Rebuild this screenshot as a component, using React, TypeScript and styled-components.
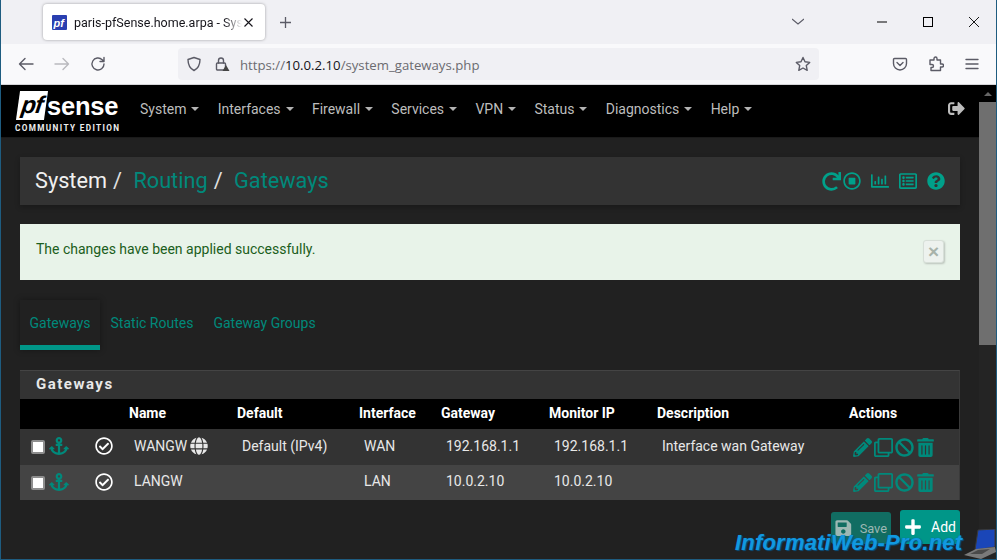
import React from "react";
import styled, { createGlobalStyle } from "styled-components";
import { FaAnchor, FaBan, FaGlobe, FaPencilAlt, FaPlus, FaQuestionCircle, FaRedo, FaRegChartBar, FaRegCheckCircle, FaRegClone, FaRegListAlt, FaRegStopCircle, FaSave, FaSignOutAlt, FaTrashAlt } from "react-icons/fa";

const Global = createGlobalStyle`
  html, body { margin: 0; padding: 0; width: 997px; height: 560px; overflow: hidden; background: #212121; }
  * { box-sizing: border-box; }
  body { font-family: Roboto, "Liberation Sans", sans-serif; }
`;

const Win = styled.div`
  width: 997px; height: 560px; display: flex; flex-direction: column; position: relative; overflow: hidden;
  border-left: 1px solid #1e5c80; border-right: 1px solid #1e5c80; border-bottom: 1px solid #1e5c80;
`;
const TabBar = styled.div`
  height: 44px; background: #f0f0f4; display: flex; align-items: flex-start; flex: none; padding-left: 42px; color: #15141a;
`;
const Tab = styled.div`
  width: 222px; height: 36px; margin-top: 4px; background: #fff; border-radius: 4px; box-shadow: 0 0 3px rgba(0,0,0,.35);
  display: flex; align-items: center; padding-left: 9px; color: #15141a; position: relative;
`;
const Favicon = styled.svg` width: 15px; height: 15px; flex: none; margin-right: 7px; `;
const TabTitle = styled.span`
  width: 170px; overflow: hidden; white-space: nowrap; font: 12.5px Roboto, sans-serif;
  -webkit-mask-image: linear-gradient(90deg, #000 150px, transparent 168px);
`;
const TabClose = styled.svg` width: 9px; height: 9px; flex: none; `;
const NewTab = styled.svg` width: 13px; height: 13px; margin: 16px 0 0 14px; flex: none; `;
const Spacer = styled.div` flex: 1; `;
const Caption = styled.svg` width: 12px; height: 12px; flex: none; margin-top: 16px; `;
const CaptionGroup = styled.div` display: flex; gap: 34px; padding-right: 16px; margin-left: 72px; `;
const Toolbar = styled.div`
  height: 41px; background: #f9f9fb; display: flex; align-items: center; flex: none; border-bottom: 1px solid #d5d5d8; position: relative;
`;
const ToolIcon = styled.svg` width: 16px; height: 16px; flex: none; `;
const NavIcons = styled.div` display: flex; align-items: center; gap: 20px; padding-left: 17px; width: 177px; `;
const UrlBar = styled.div`
  width: 641px; height: 32px; background: #f0f0f4; border-radius: 4px; display: flex; align-items: center; padding: 0 8px; gap: 12px;
`;
const Url = styled.div` font: 13.2px "Open Sans", sans-serif; color: #6b6b70; margin: 1px 0 0 -2px; white-space: nowrap; flex: 1; `;
const UrlHost = styled.span` color: #15141a; `;
const RightIcons = styled.div` display: flex; align-items: center; gap: 20px; padding-left: 73px; `;

const Page = styled.div` flex: 1; display: flex; min-height: 0; `;
const Main = styled.div` flex: 1; display: flex; flex-direction: column; background: #212121; min-width: 0; `;
const Scrollbar = styled.div` width: 17px; flex: none; display: flex; flex-direction: column; background: #242424; `;
const ScrollArrow = styled.div` height: 17px; background: #000; display: flex; align-items: center; justify-content: center; `;
const ScrollThumb = styled.div` height: 243px; background: #6f6f6f; `;
const Navbar = styled.div` height: 52px; background: #000; display: flex; align-items: center; flex: none; padding-left: 14px; position: relative; box-shadow: 0 1px 0 #1a1a1a; `;
const Logo = styled.div` width: 108px; height: 46px; display: flex; flex-direction: column; flex: none; `;
const LogoTop = styled.div` display: flex; align-items: flex-end; height: 32px; `;
const LogoPf = styled.div`
  width: 28px; height: 29px; background: #fff; color: #000; transform: skewX(-8deg); margin-left: 3px;
  font: italic 700 24px/27px "Liberation Sans", sans-serif; letter-spacing: -1px; text-align: center;
`;
const LogoSense = styled.div` color: #fff; font: 700 25.5px/28px "Liberation Sans", sans-serif; margin-left: 1px; letter-spacing: -.2px; `;
const LogoSub = styled.div` color: #eee; font: 700 8.2px/12px Roboto, sans-serif; letter-spacing: 1.37px; white-space: nowrap; margin-top: 2px; `;
const Menu = styled.div` display: flex; gap: 18.3px; margin-left: 17px; font-size: 14px; align-items: center; margin-top: -5px; `;
const MenuItem = styled.div` display: flex; align-items: center; gap: 5px; color: #bdbdbd; `;
const Caret = styled.span` width: 0; height: 0; border-left: 4px solid transparent; border-right: 4px solid transparent; border-top: 4px solid #b3b3b3; `;
const ScrollCaret = styled.span` width: 0; height: 0; border-left: 4px solid transparent; border-right: 4px solid transparent; border-bottom: 4px solid #666; `;
const Logout = styled.div` position: absolute; right: 14px; top: 15px; color: #bdbdbd; font-size: 17px; line-height: 17px; display: flex; `;

const Content = styled.div` padding: 20px 19px 0 19px; display: flex; flex-direction: column; flex: 1; min-height: 0; `;
const Crumb = styled.div`
  height: 48px; background: #333; display: flex; align-items: center; padding: 0 15px; box-shadow: 0 2px 5px rgba(0,0,0,.25); flex: none;
`;
const CrumbText = styled.div` font-size: 21.7px; color: #f0f0f0; display: flex; gap: 11.5px; padding-bottom: 1px; `;
const Crumbs = styled.span` color: #00897b; `;
const CrumbSep = styled.span` color: #e0e0e0; margin-left: 6px; `;
const CrumbItem = styled.span` display: flex; `;
const CrumbIcons = styled.div` margin-left: auto; display: flex; align-items: center; color: #00a08a; font-size: 18px; gap: 10px; `;
const RedoBox = styled.span` font-size: 19px; display: flex; margin-right: -8px; margin-left: 1px; `;
const Alert = styled.div`
  height: 56px; margin-top: 19px; background: #e8f3e9; color: #1b5e20; font-size: 14px; display: flex; align-items: center; justify-content: space-between; padding: 0 16px 7px 16px; flex: none;
`;
const AlertClose = styled.div`
  width: 21px; height: 23px; margin-top: 6px; border-radius: 3px; border: 1px solid #d7dfd8; background: #edf2ee; box-shadow: 1px 1px 2px rgba(0,0,0,.2); color: #a8b3aa;
  display: flex; align-items: center; justify-content: center; font: 700 19px/1 "Liberation Sans", sans-serif;
`;
const Tabs = styled.div` display: flex; margin-top: 20px; height: 50px; flex: none; `;
const TabLink = styled.div<{ $active?: boolean }>`
  padding: 15px 9.5px 0; margin-right: 1px; color: #00897b; font-size: 14px; height: 50px;
  ${(p) => p.$active && `border-bottom: 5px solid #009688; box-shadow: 0 0 6px rgba(0,0,0,.35);`}
`;
const Panel = styled.div` margin-top: 20px; background: #333; display: flex; flex-direction: column; border-top: 1px solid #444; border-right: 1px solid #3a3a3a; flex: none; `;
const PanelHead = styled.div` height: 28px; padding: 0 0 2px 16px; display: flex; align-items: center; color: #e8e8e8; font-size: 15px; font-weight: 700; letter-spacing: 1.5px; `;
const Grid = "29px 39px 41px 108px 122px 82px 108px 108px 192px 1fr";
const HeadRow = styled.div` height: 30px; background: #000; display: grid; grid-template-columns: ${Grid}; align-items: center; color: #fff; font-size: 14px; font-weight: 700; padding-bottom: 2px; `;
const Row = styled.div<{ $alt?: boolean }>`
  height: ${(p) => (p.$alt ? 35 : 36)}px; background: ${(p) => (p.$alt ? "#444" : "#333")}; display: grid; grid-template-columns: ${Grid}; align-items: center; color: #e8e8e8; font-size: 14px;
`;
const Cell = styled.div<{ $alt?: boolean }>` padding: 0 0 ${(p) => (p.$alt ? 3 : 2)}px 5px; white-space: nowrap; display: flex; align-items: center; gap: 3px; `;
const HeadCell = styled.div` white-space: nowrap; `;
const Check = styled.div` width: 14px; height: 14px; background: #fff; border: 2px solid #8e8e8e; border-radius: 2px; margin-left: 11px; `;
const AnchorIco = styled.div` color: #00897b; font-size: 20px; display: flex; margin-top: -2px; `;
const StateIco = styled.div` color: #fff; font-size: 18px; display: flex; padding-left: 7px; margin-top: -2px; `;
const Actions = styled.div` display: flex; gap: 2px; color: #00897b; font-size: 19px; align-items: center; padding-left: 4px; `;
const ActBtns = styled.div` display: flex; justify-content: flex-end; align-items: flex-end; gap: 9px; margin-top: 10px; flex: none; `;
const Btn = styled.div<{ $muted?: boolean }>`
  width: 60px; height: ${(p) => (p.$muted ? 32 : 34)}px; border-radius: 3px; background: ${(p) => (p.$muted ? "#116d62" : "#009688")}; color: ${(p) => (p.$muted ? "#9db8b4" : "#fff")};
  display: flex; align-items: center; font-size: ${(p) => (p.$muted ? 12.8 : 14)}px; padding: 0 4px; gap: ${(p) => (p.$muted ? 8 : 9)}px;
`;
const Watermark = styled.div`
  position: absolute; left: 734px; bottom: 3px; color: #1199e0; font: italic 700 22px/27px "Liberation Sans", sans-serif; letter-spacing: .2px;
  text-shadow: 0 0 1px #0a5d9c, 1px 1px 1px #09517f;
`;
const Laptop = styled.svg` position: absolute; right: 0; bottom: 0; width: 34px; height: 30px; `;

const S = { fill: "none", stroke: "#5b5b66", strokeWidth: 1.4, strokeLinecap: "round" as const, strokeLinejoin: "round" as const };
const menu = ["System", "Interfaces", "Firewall", "Services", "VPN", "Status", "Diagnostics", "Help"];

function GatewayRow(p: { alt?: boolean; name: string; globe?: boolean; def?: string; iface: string; gw: string; mon: string; desc?: string }) {
  return (
    <Row $alt={p.alt}>
      <Check />
      <AnchorIco><FaAnchor /></AnchorIco>
      <StateIco><FaRegCheckCircle /></StateIco>
      <Cell $alt={p.alt}>{p.name}{p.globe && <FaGlobe size={18} />}</Cell>
      <Cell $alt={p.alt}>{p.def}</Cell>
      <Cell $alt={p.alt}>{p.iface}</Cell>
      <Cell $alt={p.alt}>{p.gw}</Cell>
      <Cell $alt={p.alt}>{p.mon}</Cell>
      <Cell $alt={p.alt}>{p.desc}</Cell>
      <Actions><FaPencilAlt /><FaRegClone /><FaBan /><FaTrashAlt /></Actions>
    </Row>
  );
}

export default function App() {
  return (
    <Win>
      <Global />
      <TabBar>
        <Tab>
          <Favicon viewBox="0 0 15 15"><rect width="15" height="15" rx="1" fill="#2a3fb0" /><text x="1.500" y="11.500" fontSize="11" fontWeight="700" fontStyle="italic" fontFamily="Liberation Sans" fill="#fff">pf</text></Favicon>
          <TabTitle>paris-pfSense.home.arpa - System: Routing</TabTitle>
          <TabClose viewBox="0 0 9 9"><path d="M.5.500l8 8M8.500.500l-8 8" stroke="#15141a" strokeWidth="1.100" /></TabClose>
        </Tab>
        <NewTab viewBox="0 0 13 13"><path d="M6.500 1v11M1 6.500h11" stroke="#5b5b66" strokeWidth="1.300" /></NewTab>
        <Spacer />
        <Caption viewBox="0 0 12 12"><path d="M0 3l6 5 6-5" fill="none" stroke="#5b5b66" strokeWidth="1.100" /></Caption>
        <CaptionGroup>
          <Caption viewBox="0 0 12 12"><path d="M1 6h10" stroke="#000" strokeWidth="1" /></Caption>
          <Caption viewBox="0 0 12 12"><rect x="1.500" y="1.500" width="9" height="9" fill="none" stroke="#000" /></Caption>
          <Caption viewBox="0 0 12 12"><path d="M1 1l10 10M11 1L1 11" stroke="#000" strokeWidth=".9" /></Caption>
        </CaptionGroup>
      </TabBar>
      <Toolbar>
        <NavIcons>
          <ToolIcon viewBox="0 0 16 16" {...S}><path d="M15 8H1.500M7 2.500 1.500 8 7 13.500" /></ToolIcon>
          <ToolIcon viewBox="0 0 16 16" {...S} stroke="#b9b9be"><path d="M1 8h13.500M9 2.500 14.500 8 9 13.500" /></ToolIcon>
          <ToolIcon viewBox="0 0 16 16" {...S}><path d="M14 8a6 6 0 1 1-1.800-4.300L14 5.500M14 1.500v4h-4" /></ToolIcon>
        </NavIcons>
        <UrlBar>
          <ToolIcon viewBox="0 0 16 16" {...S}><path d="M8 1.500 14 3.500c0 5-2 9-6 11-4-2-6-6-6-11z" /></ToolIcon>
          <ToolIcon viewBox="0 0 16 16" {...S}><rect x="2.500" y="7" width="9" height="7" rx="1" /><path d="M4.500 7V4.500a2.500 2.500 0 0 1 5 0V7" /><path d="M12 9l3.500 6h-7z" fill="#444" stroke="none" /></ToolIcon>
          <Url>https://<UrlHost>10.0.2.10</UrlHost>/system_gateways.php</Url>
          <ToolIcon viewBox="0 0 16 16" {...S}><path d="M8 1.500l2 4.300 4.700.6-3.400 3.200.9 4.700L8 12l-4.200 2.300.9-4.700L1.300 6.400 6 5.800z" /></ToolIcon>
        </UrlBar>
        <RightIcons>
          <ToolIcon viewBox="0 0 16 16" {...S}><path d="M2.500 2.500h11a1 1 0 0 1 1 1v4a6.500 6.500 0 0 1-13 0v-4a1 1 0 0 1 1-1z" /><path d="M5 6.500l3 3 3-3" /></ToolIcon>
          <ToolIcon viewBox="0 0 16 16" {...S}><path d="M6 2.500a1.500 1.500 0 0 1 3 0V4h3.500v4H14a1.500 1.500 0 0 1 0 3h-1.500v3.500H3v-3h1a1.500 1.500 0 0 0 0-3H2V4h4z" /></ToolIcon>
          <ToolIcon viewBox="0 0 16 16" {...S}><path d="M2 3.500h12M2 8h12M2 12.500h12" /></ToolIcon>
        </RightIcons>
      </Toolbar>
      <Page>
        <Main>
          <Navbar>
            <Logo>
              <LogoTop><LogoPf>pf</LogoPf><LogoSense>sense</LogoSense></LogoTop>
              <LogoSub>COMMUNITY EDITION</LogoSub>
            </Logo>
            <Menu>{menu.map((m) => <MenuItem key={m}>{m}<Caret /></MenuItem>)}</Menu>
            <Logout><FaSignOutAlt /></Logout>
          </Navbar>
          <Content>
            <Crumb>
              <CrumbText>
                <CrumbItem>System<CrumbSep>/</CrumbSep></CrumbItem>
                <CrumbItem><Crumbs>Routing</Crumbs><CrumbSep>/</CrumbSep></CrumbItem>
                <Crumbs>Gateways</Crumbs>
              </CrumbText>
              <CrumbIcons><RedoBox><FaRedo /></RedoBox><FaRegStopCircle /><FaRegChartBar /><FaRegListAlt /><FaQuestionCircle /></CrumbIcons>
            </Crumb>
            <Alert>The changes have been applied successfully.<AlertClose>×</AlertClose></Alert>
            <Tabs>
              <TabLink $active>Gateways</TabLink>
              <TabLink>Static Routes</TabLink>
              <TabLink>Gateway Groups</TabLink>
            </Tabs>
            <Panel>
              <PanelHead>Gateways</PanelHead>
              <HeadRow>
                <span /><span /><span />
                <HeadCell>Name</HeadCell><HeadCell>Default</HeadCell><HeadCell>Interface</HeadCell><HeadCell>Gateway</HeadCell><HeadCell>Monitor IP</HeadCell><HeadCell>Description</HeadCell><HeadCell>Actions</HeadCell>
              </HeadRow>
              <GatewayRow name="WANGW" globe def="Default (IPv4)" iface="WAN" gw="192.168.1.1" mon="192.168.1.1" desc="Interface wan Gateway" />
              <GatewayRow alt name="LANGW" iface="LAN" gw="10.0.2.10" mon="10.0.2.10" />
            </Panel>
            <ActBtns>
              <Btn $muted><FaSave size={18} />Save</Btn>
              <Btn><FaPlus size={18} />Add</Btn>
            </ActBtns>
          </Content>
        </Main>
        <Scrollbar>
          <ScrollArrow><ScrollCaret /></ScrollArrow>
          <ScrollThumb />
        </Scrollbar>
      </Page>
      <Watermark>InformatiWeb-Pro.net</Watermark>
      <Laptop viewBox="0 0 34 30">
        <path d="M16 1 33 0v18L13 21z" fill="#1a46b8" stroke="#3a3a3a" />
        <path d="M2 26l12-6 19-2 1 5-15 7z" fill="#7a7a7a" />
        <path d="M8 25l8-4 12-1-8 5z" fill="#4a4a4a" />
      </Laptop>
    </Win>
  );
}
